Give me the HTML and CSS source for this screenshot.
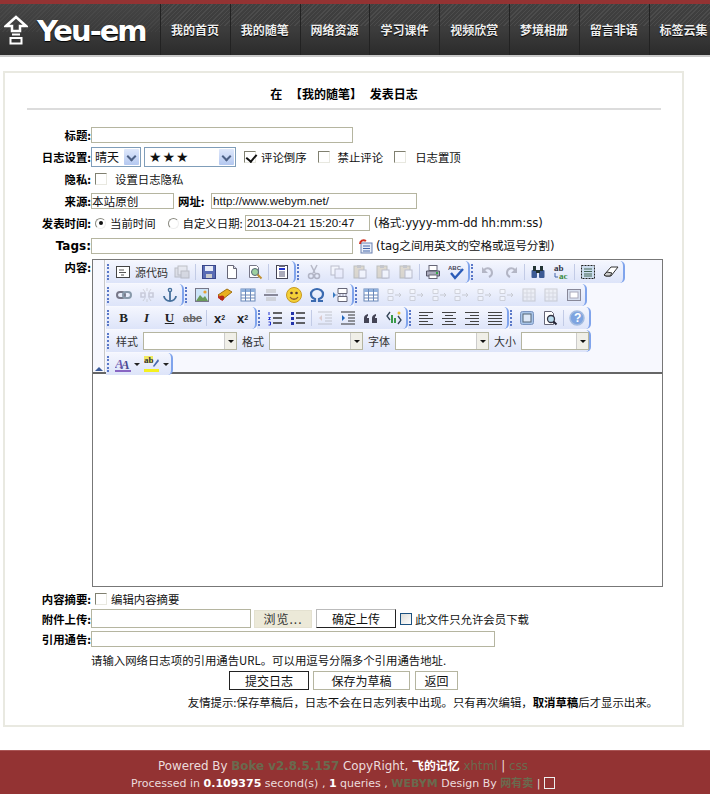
FILE: index.html
```html
<!DOCTYPE html>
<html lang="zh-CN">
<head>
<meta charset="utf-8">
<title>发表日志</title>
<link rel="stylesheet" href="styles.css">
</head>
<body>
<svg class="defs" width="0" height="0" aria-hidden="true">
<defs>
<symbol id="i-src" viewBox="0 0 16 16"><rect x="1.5" y="2.5" width="13" height="11" fill="#fff" stroke="#444"/><path d="M4 6h5M4 8.5h7M6 11h3" stroke="#555"/></symbol>
<symbol id="i-tpls" viewBox="0 0 16 16"><rect x="1" y="4" width="9" height="9" fill="#ccc" stroke="#777"/><rect x="4" y="2" width="9" height="9" fill="#ddd" stroke="#777"/><rect x="7" y="7" width="8" height="7" fill="#bbb" stroke="#777"/></symbol>
<symbol id="i-save" viewBox="0 0 16 16"><rect x="1.5" y="1.5" width="13" height="13" fill="#5a6cb4" stroke="#39468a"/><rect x="4" y="2" width="8" height="5" fill="#e8ecf8"/><rect x="5" y="10" width="6" height="4" fill="#ccc"/></symbol>
<symbol id="i-new" viewBox="0 0 16 16"><path d="M3.5 1.5h6l3 3v10h-9z" fill="#fff" stroke="#667"/><path d="M9.5 1.5v3h3" fill="#dde" stroke="#667"/></symbol>
<symbol id="i-prev" viewBox="0 0 16 16"><path d="M2.5 1.5h7l2 2v10h-9z" fill="#fff" stroke="#778"/><circle cx="8" cy="8" r="3.5" fill="#9cd0a0" stroke="#567"/><path d="M10.5 10.5l4 4" stroke="#c09030" stroke-width="2"/></symbol>
<symbol id="i-tpl" viewBox="0 0 16 16"><rect x="2.5" y="1.5" width="11" height="13" fill="#fff" stroke="#445"/><rect x="5" y="1" width="6" height="2" fill="#667"/><path d="M5 5h6" stroke="#23c" stroke-width="2"/><path d="M5 8h6M5 10h6M5 12h6" stroke="#557"/></symbol>
<symbol id="i-cut" viewBox="0 0 16 16"><path d="M5 1l4 8M11 1L7 9" stroke="#667" stroke-width="1.5"/><circle cx="5" cy="12" r="2.5" fill="none" stroke="#667" stroke-width="1.5"/><circle cx="11" cy="12" r="2.5" fill="none" stroke="#667" stroke-width="1.5"/></symbol>
<symbol id="i-copy" viewBox="0 0 16 16"><rect x="2" y="2" width="8" height="9" fill="#fff" stroke="#778"/><rect x="6" y="5" width="8" height="9" fill="#eef" stroke="#778"/></symbol>
<symbol id="i-paste" viewBox="0 0 16 16"><rect x="2" y="2" width="10" height="12" fill="#c8b890" stroke="#776"/><rect x="5" y="1" width="4" height="3" fill="#888"/><rect x="7" y="6" width="7" height="8" fill="#fff" stroke="#778"/></symbol>
<symbol id="i-print" viewBox="0 0 16 16"><rect x="4" y="1.5" width="8" height="5" fill="#fff" stroke="#667"/><path d="M1.5 7h13v5h-13z" fill="#aab" stroke="#556"/><rect x="4" y="11" width="8" height="3.5" fill="#fff" stroke="#667"/><rect x="11" y="8" width="2" height="2" fill="#3a4"/></symbol>
<symbol id="i-spell" viewBox="0 0 16 16"><text x="0" y="6" class="ic-t" fill="#445">ABC</text><path d="M3 9l4 5 8-9" fill="none" stroke="#2a5bb8" stroke-width="2.4"/></symbol>
<symbol id="i-undo" viewBox="0 0 16 16"><path d="M4 6c3-3 8-2 8 3 0 2-1 3-3 4" fill="none" stroke="#667" stroke-width="2"/><path d="M2 3v6h6z" fill="#667"/></symbol>
<symbol id="i-redo" viewBox="0 0 16 16"><path d="M12 6C9 3 4 4 4 9c0 2 1 3 3 4" fill="none" stroke="#667" stroke-width="2"/><path d="M14 3v6H8z" fill="#667"/></symbol>
<symbol id="i-find" viewBox="0 0 16 16"><rect x="1.5" y="6" width="5.5" height="8" rx="1" fill="#3c5a94"/><rect x="9" y="6" width="5.5" height="8" rx="1" fill="#3c5a94"/><rect x="3" y="2" width="3" height="5" fill="#233"/><rect x="10" y="2" width="3" height="5" fill="#233"/><rect x="6" y="6" width="4" height="3" fill="#233"/></symbol>
<symbol id="i-repl" viewBox="0 0 16 16"><text x="1" y="7" class="ic-s" fill="#334">ab</text><text x="6" y="15" class="ic-s" fill="#3a8a3a">ac</text><path d="M2 9v4h3" fill="none" stroke="#46a"/></symbol>
<symbol id="i-all" viewBox="0 0 16 16"><rect x="1.5" y="1.5" width="13" height="13" fill="#cde" stroke="#222" stroke-dasharray="2 1"/><path d="M4 5h8M4 7.5h8M4 10h8M4 12h8" stroke="#465"/></symbol>
<symbol id="i-erase" viewBox="0 0 16 16"><path d="M1 11l7-8h7L8 12H3z" fill="#fff" stroke="#333"/><path d="M1 11l3-3 5 1-2 3H3z" fill="#ccc" stroke="#333"/></symbol>
<symbol id="i-link" viewBox="0 0 16 16"><rect x="1" y="5" width="8" height="6" rx="3" fill="none" stroke="#778" stroke-width="2"/><rect x="7" y="5" width="8" height="6" rx="3" fill="none" stroke="#89a" stroke-width="2"/></symbol>
<symbol id="i-unlink" viewBox="0 0 16 16"><path d="M2 6h4v4H2zM10 6h4v4h-4z" fill="none" stroke="#99a" stroke-width="1.6"/><path d="M4 2l2 3M12 2l-2 3M4 14l2-3M12 14l-2-3M8 1v3M8 12v3" stroke="#aaa"/></symbol>
<symbol id="i-anchor" viewBox="0 0 16 16"><circle cx="8" cy="3" r="1.6" fill="none" stroke="#46709c" stroke-width="1.4"/><path d="M8 4.5V14M2 9c0 3 3 5 6 5s6-2 6-5" fill="none" stroke="#46709c" stroke-width="1.8"/></symbol>
<symbol id="i-image" viewBox="0 0 16 16"><rect x="1.5" y="1.5" width="13" height="13" fill="#cde4f8" stroke="#778"/><path d="M2 14l4-6 3 3 2-2 3 5z" fill="#6a9a5a"/><circle cx="11" cy="5" r="1.6" fill="#e8a030"/></symbol>
<symbol id="i-flash" viewBox="0 0 16 16"><path d="M1 8l9-6 5 3-9 7z" fill="#e8b020" stroke="#a07010"/><path d="M1 8l5 4v2l-5-3z" fill="#c03020"/><circle cx="5" cy="11" r="2.4" fill="#b82818"/></symbol>
<symbol id="i-table" viewBox="0 0 16 16"><rect x="1" y="2" width="14" height="12" fill="#fff" stroke="#6a88b8"/><rect x="1" y="2" width="14" height="3" fill="#8fb0dc"/><path d="M1 8h14M1 11h14M5.500 2v12M10.500 2v12" stroke="#6a88b8"/></symbol>
<symbol id="i-hr" viewBox="0 0 16 16"><path d="M3 3h10M3 5h10M3 11h10M3 13h10" stroke="#bbb"/><path d="M1 8h14" stroke="#889" stroke-width="2"/></symbol>
<symbol id="i-smile" viewBox="0 0 16 16"><circle cx="8" cy="8" r="7.500" fill="#f4d038" stroke="#c89a20"/><circle cx="5.500" cy="6" r="1.300" fill="#533"/><circle cx="10.500" cy="6" r="1.300" fill="#533"/><path d="M4 10c2 3 6 3 8 0" fill="none" stroke="#853" stroke-width="1.300"/></symbol>
<symbol id="i-omega" viewBox="0 0 16 16"><path d="M2 14h4v-2C3 11 2 9 2 7c0-3 3-5 6-5s6 2 6 5c0 2-1 4-4 5v2h4" fill="none" stroke="#3a6ab0" stroke-width="2.200"/></symbol>
<symbol id="i-pb" viewBox="0 0 16 16"><path d="M6 1.500h9v5H6zM6 9.500h9v5H6z" fill="#fff" stroke="#667"/><path d="M1 5v6l3-3z" fill="#3a7ac0"/><path d="M4 8h11" stroke="#99a" stroke-dasharray="2 1"/></symbol>
<symbol id="i-tcell" viewBox="0 0 16 16"><rect x="2" y="2" width="12" height="12" fill="#eee" stroke="#999"/><path d="M6 2v12M10 2v12M2 6h12M2 10h12" stroke="#bbb"/></symbol>
<symbol id="i-tmove" viewBox="0 0 16 16"><path d="M2 2.500h5v4H2zM2 9.500h5v4H2z" fill="#fff" stroke="#aaa"/><path d="M9 8h6M13 6l2 2-2 2" fill="none" stroke="#999"/></symbol>
<symbol id="i-tmax" viewBox="0 0 16 16"><rect x="1.500" y="2.500" width="13" height="11" fill="#d8e0f0" stroke="#889"/><rect x="4" y="5" width="8" height="6" fill="#fff" stroke="#aab"/></symbol>
<symbol id="i-ol" viewBox="0 0 16 16"><path d="M6 3h9M6 8h9M6 13h9" stroke="#333" stroke-width="1.300"/><path d="M2 2v3M1.500 7.500h2l-2 2h2M1.500 12h2v3h-2" fill="none" stroke="#23c"/></symbol>
<symbol id="i-ul" viewBox="0 0 16 16"><path d="M6 3h9M6 8h9M6 13h9" stroke="#333" stroke-width="1.300"/><rect x="1" y="2" width="3" height="3" fill="#23a"/><rect x="1" y="7" width="3" height="3" fill="#23a"/><rect x="1" y="12" width="3" height="3" fill="#23a"/></symbol>
<symbol id="i-out" viewBox="0 0 16 16"><path d="M1 2h14M8 5h7M8 8h7M8 11h7M1 14h14" stroke="#888"/><path d="M5 5v6L2 8z" fill="#c98"/></symbol>
<symbol id="i-ind" viewBox="0 0 16 16"><path d="M1 2h14M8 5h7M8 8h7M8 11h7M1 14h14" stroke="#333"/><path d="M2 5v6l3-3z" fill="#26b"/></symbol>
<symbol id="i-quote" viewBox="0 0 16 16"><path d="M1 13V8c0-2 1-3 4-4v2c-1 0-1 1-1 2h2v5zM9 13V8c0-2 1-3 4-4v2c-1 0-1 1-1 2h2v5z" fill="#445"/></symbol>
<symbol id="i-div" viewBox="0 0 16 16"><path d="M4 2L1 6l3 4M12 6l3 4-3 4" fill="none" stroke="#345" stroke-width="1.300"/><path d="M6 5v8M9 8v5" stroke="#3a9a4a" stroke-width="2"/><circle cx="13" cy="3" r="1.500" fill="#e8c040"/></symbol>
<symbol id="i-al" viewBox="0 0 16 16"><path d="M1 2.500h14M1 5.500h9M1 8.500h14M1 11.500h9M1 14.500h14" stroke="#444"/></symbol>
<symbol id="i-ac" viewBox="0 0 16 16"><path d="M1 2.500h14M4 5.500h8M1 8.500h14M4 11.500h8M1 14.500h14" stroke="#444"/></symbol>
<symbol id="i-ar" viewBox="0 0 16 16"><path d="M1 2.500h14M6 5.500h9M1 8.500h14M6 11.500h9M1 14.500h14" stroke="#444"/></symbol>
<symbol id="i-aj" viewBox="0 0 16 16"><path d="M1 2.500h14M1 5.500h14M1 8.500h14M1 11.500h14M1 14.500h14" stroke="#444"/></symbol>
<symbol id="i-max" viewBox="0 0 16 16"><rect x="1.500" y="1.500" width="13" height="13" rx="2" fill="#a8c4e8" stroke="#7a94c0"/><rect x="4" y="4" width="8" height="8" fill="#dde8f8" stroke="#567"/></symbol>
<symbol id="i-blocks" viewBox="0 0 16 16"><path d="M2.500 1.500h7l2 2v11h-9z" fill="#fff" stroke="#667"/><circle cx="9" cy="9" r="3.500" fill="#bde" stroke="#334" stroke-width="1.300"/><path d="M11.500 11.500l3 3" stroke="#223" stroke-width="2"/></symbol>
<symbol id="i-about" viewBox="0 0 16 16"><circle cx="8" cy="8" r="7" fill="#7ea4e0" stroke="#a4bce0" stroke-width="1.500"/><text x="5" y="12" class="ic-q" fill="#fff">?</text></symbol>
<symbol id="i-fc" viewBox="0 0 16 16"><text x="0" y="12" class="ic-a" fill="#6a5ab0">A</text><text x="6" y="13" class="ic-a" fill="#4a4a90">A</text><path d="M0 15h16" stroke="#6a3ab0" stroke-width="1.500"/></symbol>
<symbol id="i-bc" viewBox="0 0 16 16"><rect x="0" y="0" width="9" height="7" fill="#f0e860"/><text x="0" y="7" class="ic-s" fill="#334">ab</text><path d="M9 10l5-7 1 2-5 6z" fill="#4a6ab0"/><rect x="0" y="13" width="15" height="3" fill="#f4f020"/></symbol>
</defs>
</svg>

<header class="top">
  <div class="logo">
    <svg class="logo-ic" width="24" height="30" viewBox="0 0 24 30"><path d="M12 2L2 11h6v5h8v-5h6z" fill="none" stroke="#fff" stroke-width="2.500"/><path d="M8 19.500h8" stroke="#fff" stroke-width="2"/><rect x="6.500" y="23" width="11" height="5.500" fill="none" stroke="#fff" stroke-width="2"/></svg>
    <span class="logo-t">Yeu-em</span>
  </div>
  <nav class="nav">
    <a>我的首页</a><a>我的随笔</a><a>网络资源</a><a>学习课件</a><a>视频欣赏</a><a>梦境相册</a><a>留言非语</a><a>标签云集</a>
  </nav>
</header>

<main class="page">
  <section class="card">
    <h1 class="head">在 【我的随笔】 发表日志</h1>
    <form class="form">
      <div class="row r-title"><label class="lb">标题:</label><span class="in w-262"></span></div>
      <div class="row r-set">
        <label class="lb">日志设置:</label>
        <span class="sel w-50"><span class="sel-v">晴天</span><i class="sel-a"></i></span>
        <span class="sel w-92 ml3"><span class="sel-v stars">★★★</span><i class="sel-a"></i></span>
        <span class="cb on ml8"></span><span class="tx ml5">评论倒序</span>
        <span class="cb ml11"></span><span class="tx ml8">禁止评论</span>
        <span class="cb ml11"></span><span class="tx ml9">日志置顶</span>
      </div>
      <div class="row r-priv"><label class="lb">隐私:</label><span class="cb ml4"></span><span class="tx ml8">设置日志隐私</span></div>
      <div class="row r-src">
        <label class="lb">来源:</label><span class="in w-83 zh">本站原创</span>
        <label class="lb-in">网址:</label><span class="in w-206">http://www.webym.net/</span>
      </div>
      <div class="row r-time">
        <label class="lb">发表时间:</label>
        <span class="rd on ml4"></span><span class="tx ml4">当前时间</span>
        <span class="rd ml12"></span><span class="tx ml4">自定义日期:</span>
        <span class="in w-125 ml2">2013-04-21 15:20:47</span><span class="tx vd ml4">(格式:yyyy-mm-dd hh:mm:ss)</span>
      </div>
      <div class="row r-tags">
        <label class="lb lb-en">Tags:</label><span class="in w-262"></span>
        <svg class="tag-ic" width="14" height="16" viewBox="0 0 14 16"><rect x="2" y="5" width="11" height="10" fill="#e8eef8" stroke="#6a80b0"/><path d="M4 8h7M4 10.500h7M4 13h7" stroke="#46a"/><path d="M1 6c0-3 3-5 6-3" fill="none" stroke="#d03020" stroke-width="2"/></svg>
        <span class="tx vd ml3">(tag之间用英文的空格或逗号分割)</span>
      </div>
      <div class="row r-edit">
        <label class="lb lb-top">内容:</label>
        <div class="editor">
          <div class="tools">
            <div class="gutter"><i class="collapse"></i></div>
            <div class="bars">
              <div class="bar">
                <div class="grp">
                  <a class="bt bt-src"><svg class="ic"><use href="#i-src"/></svg><span>源代码</span></a>
                  <a class="bt off"><svg class="ic"><use href="#i-tpls"/></svg></a><b class="sp"></b>
                  <a class="bt"><svg class="ic"><use href="#i-save"/></svg></a>
                  <a class="bt"><svg class="ic"><use href="#i-new"/></svg></a>
                  <a class="bt"><svg class="ic"><use href="#i-prev"/></svg></a><b class="sp"></b>
                  <a class="bt"><svg class="ic"><use href="#i-tpl"/></svg></a>
                </div>
                <div class="grp">
                  <a class="bt off"><svg class="ic"><use href="#i-cut"/></svg></a>
                  <a class="bt off"><svg class="ic"><use href="#i-copy"/></svg></a>
                  <a class="bt off"><svg class="ic"><use href="#i-paste"/></svg></a>
                  <a class="bt off"><svg class="ic"><use href="#i-paste"/></svg></a>
                  <a class="bt off"><svg class="ic"><use href="#i-paste"/></svg></a><b class="sp"></b>
                  <a class="bt"><svg class="ic"><use href="#i-print"/></svg></a>
                  <a class="bt"><svg class="ic"><use href="#i-spell"/></svg></a>
                </div>
                <div class="grp">
                  <a class="bt off"><svg class="ic"><use href="#i-undo"/></svg></a>
                  <a class="bt off"><svg class="ic"><use href="#i-redo"/></svg></a><b class="sp"></b>
                  <a class="bt"><svg class="ic"><use href="#i-find"/></svg></a>
                  <a class="bt"><svg class="ic"><use href="#i-repl"/></svg></a><b class="sp"></b>
                  <a class="bt"><svg class="ic"><use href="#i-all"/></svg></a>
                  <a class="bt"><svg class="ic"><use href="#i-erase"/></svg></a>
                </div>
              </div>
              <div class="bar">
                <div class="grp">
                  <a class="bt"><svg class="ic"><use href="#i-link"/></svg></a>
                  <a class="bt off"><svg class="ic"><use href="#i-unlink"/></svg></a>
                  <a class="bt"><svg class="ic"><use href="#i-anchor"/></svg></a>
                </div>
                <div class="grp">
                  <a class="bt"><svg class="ic"><use href="#i-image"/></svg></a>
                  <a class="bt"><svg class="ic"><use href="#i-flash"/></svg></a>
                  <a class="bt"><svg class="ic"><use href="#i-table"/></svg></a>
                  <a class="bt"><svg class="ic"><use href="#i-hr"/></svg></a>
                  <a class="bt"><svg class="ic"><use href="#i-smile"/></svg></a>
                  <a class="bt"><svg class="ic"><use href="#i-omega"/></svg></a>
                  <a class="bt"><svg class="ic"><use href="#i-pb"/></svg></a>
                </div>
                <div class="grp grp-t">
                  <a class="bt"><svg class="ic"><use href="#i-table"/></svg></a>
                  <a class="bt off"><svg class="ic"><use href="#i-tmove"/></svg></a>
                  <a class="bt off"><svg class="ic"><use href="#i-tmove"/></svg></a>
                  <a class="bt off"><svg class="ic"><use href="#i-tmove"/></svg></a>
                  <a class="bt off"><svg class="ic"><use href="#i-tmove"/></svg></a>
                  <a class="bt off"><svg class="ic"><use href="#i-tmove"/></svg></a>
                  <a class="bt off"><svg class="ic"><use href="#i-tmove"/></svg></a>
                  <a class="bt off"><svg class="ic"><use href="#i-tcell"/></svg></a>
                  <a class="bt off"><svg class="ic"><use href="#i-tcell"/></svg></a>
                  <a class="bt"><svg class="ic"><use href="#i-tmax"/></svg></a>
                </div>
              </div>
              <div class="bar">
                <div class="grp">
                  <a class="bt ch ch-b">B</a>
                  <a class="bt ch ch-i">I</a>
                  <a class="bt ch ch-u">U</a>
                  <a class="bt ch ch-s">abc</a><b class="sp"></b>
                  <a class="bt ch ch-x">x<sub>2</sub></a>
                  <a class="bt ch ch-x">x<sup>2</sup></a>
                </div>
                <div class="grp">
                  <a class="bt"><svg class="ic"><use href="#i-ol"/></svg></a>
                  <a class="bt"><svg class="ic"><use href="#i-ul"/></svg></a><b class="sp"></b>
                  <a class="bt off"><svg class="ic"><use href="#i-out"/></svg></a>
                  <a class="bt"><svg class="ic"><use href="#i-ind"/></svg></a>
                  <a class="bt"><svg class="ic"><use href="#i-quote"/></svg></a>
                  <a class="bt"><svg class="ic"><use href="#i-div"/></svg></a>
                </div>
                <div class="grp">
                  <a class="bt"><svg class="ic"><use href="#i-al"/></svg></a>
                  <a class="bt"><svg class="ic"><use href="#i-ac"/></svg></a>
                  <a class="bt"><svg class="ic"><use href="#i-ar"/></svg></a>
                  <a class="bt"><svg class="ic"><use href="#i-aj"/></svg></a>
                </div>
                <div class="grp">
                  <a class="bt"><svg class="ic"><use href="#i-max"/></svg></a>
                  <a class="bt"><svg class="ic"><use href="#i-blocks"/></svg></a><b class="sp"></b>
                  <a class="bt"><svg class="ic"><use href="#i-about"/></svg></a>
                </div>
              </div>
              <div class="bar">
                <div class="grp grp-sel">
                  <span class="cap">样式</span><span class="combo w-94"><i></i></span>
                  <span class="cap">格式</span><span class="combo w-94"><i></i></span>
                  <span class="cap">字体</span><span class="combo w-94"><i></i></span>
                  <span class="cap">大小</span><span class="combo w-68"><i></i></span>
                </div>
              </div>
              <div class="bar">
                <div class="grp">
                  <a class="bt bt-dd"><svg class="ic"><use href="#i-fc"/></svg><i class="dd"></i></a>
                  <a class="bt bt-dd"><svg class="ic"><use href="#i-bc"/></svg><i class="dd"></i></a>
                </div>
              </div>
            </div>
          </div>
          <div class="area"></div>
        </div>
      </div>
      <div class="row r-sum"><label class="lb">内容摘要:</label><span class="cb ml4"></span><span class="tx ml4">编辑内容摘要</span></div>
      <div class="row r-up">
        <label class="lb">附件上传:</label><span class="in w-160 tall"></span>
        <a class="btn btn-br ml3">浏览...</a>
        <a class="btn btn-up ml4">确定上传</a>
        <span class="cb cb-blue ml4"></span><span class="tx ml3">此文件只允许会员下载</span>
      </div>
      <div class="row r-tb"><label class="lb">引用通告:</label><span class="in w-404"></span></div>
      <p class="note">请输入网络日志项的引用通告URL。可以用逗号分隔多个引用通告地址.</p>
      <div class="acts">
        <a class="btn btn-main">提交日志</a>
        <a class="btn btn-plain w-97">保存为草稿</a>
        <a class="btn btn-plain w-43">返回</a>
      </div>
      <p class="tip">友情提示:保存草稿后，日志不会在日志列表中出现。只有再次编辑，<b>取消草稿</b>后才显示出来。</p>
    </form>
  </section>
</main>

<footer class="foot">
  <p class="f1">Powered By <a>Boke v2.8.5.157</a> CopyRight, <b>飞的记忆</b> <a class="thin">xhtml</a> | <a class="thin">css</a></p>
  <p class="f2">Processed in <b>0.109375</b> second(s) , <b>1</b> queries , <a>WEBYM</a> Design By <a>网有卖</a> | <span class="tofu"></span></p>
</footer>
</body>
</html>
```
FILE: styles.css
```css
* { box-sizing: border-box; }
html, body { margin: 0; padding: 0; }
body { width: 710px; height: 794px; overflow: hidden; background: #fff; color: #111; font: 11.4px/14px "Noto Sans CJK SC", "Liberation Sans", sans-serif; }
.defs { position: absolute; }
.ic-t { font: bold 6px "Liberation Sans", sans-serif; }
.ic-s { font: bold 9px "Liberation Serif", serif; }
.ic-q { font: bold 12px "Liberation Sans", sans-serif; }
.ic-a { font: italic bold 13px "Liberation Serif", serif; }

/* header */
.top { display: flex; height: 57px; background: #333; border-top: 4px solid #933333; border-bottom: 2px solid #c9c9c9; }
.logo { flex: none; display: flex; align-items: center; width: 160px; padding: 0 0 0 4px; gap: 9px; background: repeating-linear-gradient(135deg, rgba(255,255,255,.04) 0 1px, transparent 1px 3px) top / 100% 28px no-repeat, linear-gradient(#444, #3e3e3e 40%, #2d2d2d); }
.logo-ic { flex: none; }
.logo-t { font: bold 29px/1 "DejaVu Sans", sans-serif; color: #fff; letter-spacing: -2px; text-shadow: 0 1px 1px #000; margin-top: 3px; }
.nav { display: flex; flex: 1; }
.nav a { flex: none; width: 69.800px; padding-left: 10px; line-height: 51px; font-size: 12px; font-weight: 700; color: #eee; white-space: nowrap; border-left: 1px solid #222; background: repeating-linear-gradient(135deg, rgba(255,255,255,.07) 0 1px, transparent 1px 3px) top / 100% 22px no-repeat, linear-gradient(#404040, #3c3c3c 50%, #2b2b2b); text-shadow: 0 1px 1px #000; }

/* card */
.page { padding: 14px 26px 0 3px; }
.card { height: 656px; border: 2px solid #e9e9e1; }
.head { margin: 0 21px 0 22px; height: 37px; border-bottom: 2px solid #dcdcdc; font-size: 12px; line-height: 42px; font-weight: 700; text-align: center; color: #000; word-spacing: 5px; }
.form { padding-top: 14px; }
.row { display: flex; align-items: center; white-space: nowrap; }
.r-title { height: 21px; }
.r-set { height: 23px; }
.r-priv { height: 22px; }
.r-src { height: 21px; }
.r-time { height: 24px; }
.r-tags { height: 22px; }
.r-edit { height: 331px; align-items: flex-start; padding-top: 2px; }
.r-sum { height: 21px; }
.r-up { height: 19px; }
.r-tb { height: 22px; }
.lb { flex: none; width: 86px; text-align: right; font-weight: 700; color: #000; }
.lb-en { font-family: "DejaVu Sans", sans-serif; font-size: 12px; }
.lb-top { padding-top: 1px; }
.lb-in { flex: none; width: 33px; margin-left: 4px; font-weight: 700; color: #000; }
.tx { color: #111; }
.vd { font-family: "DejaVu Sans", "Noto Sans CJK SC", sans-serif; font-size: 11.7px; letter-spacing: -.1px; }

.in { display: block; flex: none; height: 16px; border: 1px solid #b5b5a0; background: #fff; padding: 0 1px; font: 11.6px/14px "Liberation Sans", sans-serif; color: #111; overflow: hidden; }
.in.zh { font-family: "Noto Sans CJK SC", sans-serif; padding: 0; }
.in.tall { height: 19px; }
.w-262 { width: 262px; }
.w-83 { width: 83px; }
.w-206 { width: 206px; }
.w-125 { width: 125px; }
.w-160 { width: 160px; }
.w-404 { width: 404px; }

.ml2 { margin-left: 2px; } .ml3 { margin-left: 3px; } .ml4 { margin-left: 4px; } .ml5 { margin-left: 5px; } .ml8 { margin-left: 8px; } .ml9 { margin-left: 9px; } .ml11 { margin-left: 11px; } .ml12 { margin-left: 12px; }

.sel { display: flex; flex: none; align-items: center; justify-content: space-between; height: 20px; border: 1px solid #7f9db9; background: #fff; padding: 1px; }
.w-50 { width: 50px; }
.w-92 { width: 92px; }
.sel-v { padding-left: 2px; font-size: 12px; color: #111; }
.stars { font: 14px/16px "DejaVu Sans", sans-serif; color: #111; letter-spacing: 1px; padding-left: 3px; }
.sel-a { position: relative; width: 15px; height: 16px; background: linear-gradient(#dfe8fb, #b4c8f0); border-radius: 1px; }
.sel-a::after { content: ""; position: absolute; left: 4px; top: 4px; width: 5px; height: 5px; border: solid #4d6185; border-width: 0 2px 2px 0; transform: rotate(45deg); }

.cb { flex: none; position: relative; display: block; width: 12px; height: 12px; border: 1px solid; border-color: #808070 #e8e8e0 #e8e8e0 #808070; background: #fff; }
.cb.on::after { content: ""; position: absolute; left: 3px; top: 0; width: 5px; height: 8px; border: solid #111; border-width: 0 2px 2px 0; transform: rotate(40deg); }
.cb-blue { border: 1px solid #1c5180; background: linear-gradient(135deg, #dcdcd8, #fff); }
.rd { flex: none; position: relative; display: block; width: 11px; height: 11px; border: 1px solid; border-color: #8a8a80 #eee #eee #8a8a80; border-radius: 50%; background: #fff; }
.rd.on::after { content: ""; position: absolute; left: 2.500px; top: 2.500px; width: 4px; height: 4px; border-radius: 50%; background: #111; }
.tag-ic { flex: none; margin-left: 6px; }

/* editor */
.editor { flex: none; width: 571px; height: 328px; margin-left: 1px; border: 1px solid #777; display: flex; flex-direction: column; }
.tools { display: flex; height: 114px; background: #f7f8fe; border-bottom: 2px solid #666; }
.gutter { position: relative; flex: none; width: 12px; border-right: 1px solid #c8c8c8; }
.collapse { position: absolute; left: 2px; bottom: 1px; border: solid transparent; border-width: 0 4px 4px; border-bottom-color: #3a5a9a; }
.bars { display: flex; flex-direction: column; gap: 1px; padding: 1px 0 0 1px; }
.bar { display: flex; height: 22px; }
.grp { position: relative; display: flex; align-items: center; height: 22px; padding: 0 1px 0 6px; background: linear-gradient(#f4f6fe, #dde4f9); border-right: 2px solid #80a4ec; border-radius: 0 5px 5px 0; }
.grp::before { content: ""; position: absolute; left: 1px; top: 3px; bottom: 3px; border-left: 2px dotted #5a78c8; }
.bt { display: flex; flex: none; align-items: center; justify-content: center; width: 23px; height: 22px; color: #333; }
.grp-t { padding-right: 0; }
.grp-t .bt { width: 22.500px; }
.bt-src { width: 58px; gap: 4px; justify-content: flex-start; padding-left: 3px; }
.bt-src span { font-size: 11px; }
.bt-dd { width: 29px; gap: 3px; justify-content: flex-start; padding-left: 3px; }
.dd { border: solid transparent; border-width: 3px 3px 0; border-top-color: #222; }
.ic { width: 16px; height: 16px; flex: none; }
.off .ic { opacity: .4; }
.sp { flex: none; width: 1px; height: 16px; margin: 0 1.500px; background: #c2cbe6; }
.ch { font-family: "Liberation Serif", serif; font-size: 13px; color: #222; }
.ch-b { font-weight: 700; }
.ch-i { font-style: italic; font-weight: 700; }
.ch-u { font-weight: 700; text-decoration: underline; }
.ch-s { font: bold 11px "Liberation Sans", sans-serif; color: #666; text-decoration: line-through; }
.ch-x { font: bold 13px "Liberation Sans", sans-serif; }
.ch-x sub, .ch-x sup { font-size: 7px; line-height: 0; }
.grp-sel { gap: 5px; padding-left: 10px; padding-right: 0; }
.cap { font-size: 11px; color: #333; }
.combo { position: relative; flex: none; display: block; height: 18px; border: 1px solid #b5b5a0; background: #fff; }
.combo i { position: absolute; right: 0; top: 0; bottom: 0; width: 12px; border-left: 1px solid #ccc; background: #f0efe8; }
.combo i::after { content: ""; position: absolute; left: 3px; top: 7px; border: solid transparent; border-width: 3px 3px 0; border-top-color: #111; }
.w-94 { width: 94px; }
.w-68 { width: 68px; }
.area { flex: 1; background: #fff; }

/* actions */
.btn { display: block; flex: none; text-align: center; font-size: 12px; color: #111; background: #fff; }
.btn-br { width: 58px; height: 18px; line-height: 16px; background: #ece9d8; color: #333; letter-spacing: 1px; border: 1px solid #e4e1d0; }
.btn-up { width: 80px; height: 19px; line-height: 17px; border: 1px solid; border-color: #bbb #222 #222 #bbb; }
.note { margin: 3px 0 0 86px; height: 14px; line-height: 14px; color: #111; }
.acts { display: flex; gap: 4px; height: 21px; margin: 3px 0 0 224px; align-items: center; }
.btn-main { width: 80px; height: 19px; line-height: 17px; border: 1px solid #222; }
.btn-plain { height: 19px; line-height: 17px; border: 1px solid #b5b5a0; }
.w-97 { width: 97px; }
.w-43 { width: 43px; }
.acts .w-43 { margin-left: 1px; }
.tip { margin: 4px 24px 0 0; height: 14px; text-align: right; color: #111; }
.tip b { color: #000; }

/* footer */
.foot { margin-top: 23px; height: 44px; background: #933333; border-top: 1px solid #a55; padding: 6px 24px 0 0; text-align: center; color: #ecdcdc; font: 11px/18px "DejaVu Sans", "Noto Sans CJK SC", sans-serif; }
.foot p { margin: 0; white-space: nowrap; }
.foot .f1 { font-size: 11.9px; }
.foot b { color: #fff; }
.foot a { color: #6a6a4e; font-weight: 700; }
.foot a.thin { font-weight: 400; }
.tofu { display: inline-block; width: 11px; height: 12px; border: 1px solid #eee; vertical-align: -2px; }
```
